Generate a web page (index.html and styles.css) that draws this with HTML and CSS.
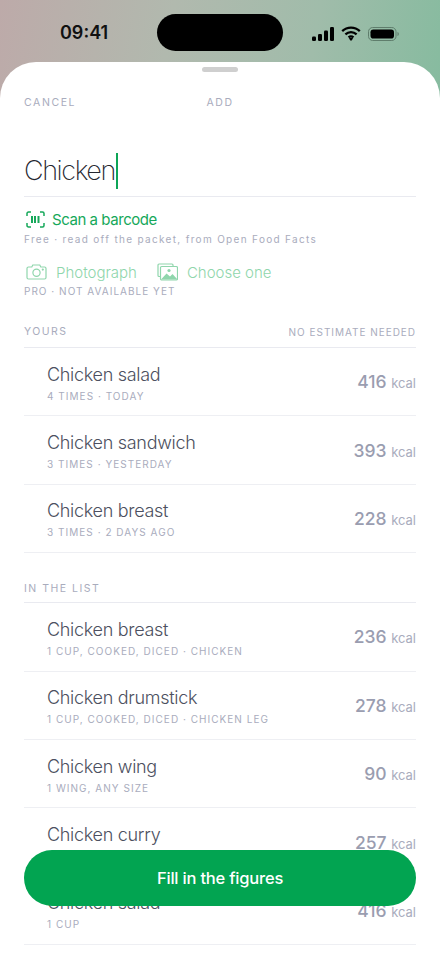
FILE: index.html
```html
<!DOCTYPE html>
<html lang="en">
<head>
<meta charset="utf-8">
<title>Add food</title>
<link rel="stylesheet" href="styles.css">
</head>
<body>
<div class="phone">
  <header class="status">
    <span class="time">09:41</span>
    <div class="island"></div>
    <div class="status-icons">
      <svg width="22" height="14" viewBox="0.5 0 22 14"><rect x="0.5" y="9.5" width="4" height="4.5" rx="1.2"/><rect x="6.5" y="7" width="4" height="7" rx="1.2"/><rect x="12.5" y="3.5" width="4" height="10.5" rx="1.2"/><rect x="18.5" y="0" width="4" height="14" rx="1.2"/></svg>
      <svg width="20" height="15" viewBox="0 0 20 15" fill="none" stroke="#000" stroke-width="2.3"><path d="M1.2 5.2C6.2.4 13.8.4 18.8 5.2"/><path d="M4.4 8.4c3.2-3 8-3 11.2 0"/><path d="M7.5 11.4c1.5-1.2 3.5-1.2 5 0"/><path d="M10 15l-2.2-2.6c1.3-.9 3.100-.9 4.400 0z" fill="#000" stroke="none"/></svg>
      <svg width="31" height="14" viewBox="0 0 31 14"><rect x="0.5" y="0.5" width="27.500" height="13" rx="4.200" fill="none" stroke="#5f7d6c"/><rect x="2.500" y="2.500" width="23.500" height="9" rx="2.800"/><path d="M29.500 5v4c.8-.3 1.300-1.100 1.300-2s-.5-1.700-1.300-2z" fill="#5f7d6c"/></svg>
    </div>
  </header>
  <main class="sheet">
    <div class="handle"></div>
    <nav class="topbar"><span class="cancel">CANCEL</span><span class="add">ADD</span></nav>
    <div class="search"><span class="query">Chicken</span><span class="caret"></span></div>
    <div class="scan">
      <svg class="scan-icon" width="19" height="17" viewBox="0 0 19 17" fill="none" stroke="#16a85a" stroke-width="1.500"><path d="M1 5V2.500C1 1.600 1.600 1 2.500 1H5M14 1h2.500c.9 0 1.500.6 1.500 1.500V5M18 12v2.500c0 .9-.6 1.500-1.500 1.500H14M5 16H2.500C1.600 16 1 15.400 1 14.500V12"/><path d="M6 5v7M9 5v7M12.500 5v7" stroke-width="2"/></svg>
      <span>Scan a barcode</span>
    </div>
    <p class="note">Free · read off the packet, from Open Food Facts</p>
    <div class="pro">
      <div class="pro-item">
        <svg width="21" height="16" viewBox="0 0 21 16" fill="none" stroke="#8fd6ac" stroke-width="1.200"><path d="M2.500 3h3.300l1-2h7l1 2h3.700c.8 0 1.500.7 1.500 1.500v9c0 .8-.7 1.500-1.500 1.500h-16C1.700 15 1 14.300 1 13.500v-9C1 3.700 1.700 3 2.500 3z"/><circle cx="10.500" cy="8.800" r="3.600"/><circle cx="16.800" cy="5.600" r=".5" fill="#8fd6ac"/></svg>
        <span>Photograph</span>
      </div>
      <div class="pro-item">
        <svg width="21" height="18" viewBox="0 0 21 18" fill="none" stroke="#8fd6ac" stroke-width="1.200"><path d="M3 13.500H2c-.6 0-1-.4-1-1V2c0-.6.400-1 1-1h13c.6 0 1 .4 1 1v1"/><rect x="3.500" y="3.500" width="17" height="13.500" rx="1.200"/><path d="M4 16.500l5.500-6 3.500 3 2.500-2.500 5 5.500z" fill="#8fd6ac" stroke="none"/><circle cx="12" cy="7.500" r="1.600" fill="#8fd6ac" stroke="none"/></svg>
        <span>Choose one</span>
      </div>
    </div>
    <p class="note caps">PRO · NOT AVAILABLE YET</p>

    <div class="section-head first"><span>YOURS</span><span class="hint">NO ESTIMATE NEEDED</span></div>
    <ul class="rows">
      <li class="row"><div class="info"><div class="name">Chicken salad</div><div class="meta">4 TIMES · TODAY</div></div><div class="cal"><b>416</b> <span>kcal</span></div></li>
      <li class="row"><div class="info"><div class="name">Chicken sandwich</div><div class="meta">3 TIMES · YESTERDAY</div></div><div class="cal"><b>393</b> <span>kcal</span></div></li>
      <li class="row"><div class="info"><div class="name">Chicken breast</div><div class="meta">3 TIMES · 2 DAYS AGO</div></div><div class="cal"><b>228</b> <span>kcal</span></div></li>
    </ul>

    <div class="section-head second"><span>IN THE LIST</span></div>
    <ul class="rows">
      <li class="row"><div class="info"><div class="name">Chicken breast</div><div class="meta">1 CUP, COOKED, DICED · CHICKEN</div></div><div class="cal"><b>236</b> <span>kcal</span></div></li>
      <li class="row"><div class="info"><div class="name">Chicken drumstick</div><div class="meta">1 CUP, COOKED, DICED · CHICKEN LEG</div></div><div class="cal"><b>278</b> <span>kcal</span></div></li>
      <li class="row"><div class="info"><div class="name">Chicken wing</div><div class="meta">1 WING, ANY SIZE</div></div><div class="cal"><b>90</b> <span>kcal</span></div></li>
      <li class="row"><div class="info"><div class="name">Chicken curry</div><div class="meta">1 CUP</div></div><div class="cal"><b>257</b> <span>kcal</span></div></li>
      <li class="row"><div class="info"><div class="name">Chicken salad</div><div class="meta">1 CUP</div></div><div class="cal"><b>416</b> <span>kcal</span></div></li>
    </ul>
    <button class="cta">Fill in the figures</button>
  </main>
</div>
</body>
</html>
```
FILE: styles.css
```css
* { box-sizing: border-box; }
html, body { margin: 0; padding: 0; }
body { font-family: Inter, "Noto Sans", sans-serif; background: #fff; }
.phone {
  position: relative;
  width: 440px;
  height: 956px;
  overflow: hidden;
  background: linear-gradient(100deg, #bdaaa9 0%, #b1b9ae 38%, #a0bcaa 70%, #86bb9f 100%) no-repeat;
  background-size: 100% 110px;
  display: flex;
  flex-direction: column;
}
.status {
  height: 62px;
  flex: none;
  position: relative;
  display: flex;
  align-items: flex-start;
  justify-content: space-between;
  padding: 23px 41px 0 60px;
}
.time { font-size: 18px; font-weight: 600; line-height: 20px; color: #111; letter-spacing: 0; }
.island {
  position: absolute;
  left: 157px;
  top: 14px;
  width: 126px;
  height: 37px;
  border-radius: 19px;
  background: #000;
}
.status-icons { display: flex; align-items: center; gap: 7px; margin-top: 3px; }
.sheet {
  position: relative;
  flex: 1;
  background: #fff;
  border-radius: 36px 36px 0 0;
  padding: 0 24px;
  overflow: hidden;
}
.handle { width: 36px; height: 5px; border-radius: 3px; background: #cfcfcf; margin: 5px auto 0; }
.topbar {
  display: flex;
  height: 14px;
  margin-top: 24px;
  align-items: center;
  font-size: 10.500px;
  letter-spacing: 1.600px;
  color: #a9acbd;
  position: relative;
  justify-content: center;
}
.cancel { position: absolute; left: 0; top: 0; line-height: 14px; }
.add { line-height: 14px; }
.search {
  display: flex;
  align-items: center;
  height: 69px;
  margin-top: 18px;
  padding-top: 18px;
  border-bottom: 1px solid #e9eaf0;
}
.query { font-size: 27px; font-weight: 200; letter-spacing: -1.400px; color: #24262f; line-height: 36px; }
.caret { width: 2px; height: 36px; background: #0da557; margin-left: 1px; }
.scan { display: flex; align-items: center; gap: 7px; margin-top: 13px; height: 18px; font-size: 15px; color: #16a85a; letter-spacing: -0.450px; padding-left: 2px; }
.scan-icon { flex: none; }
.note { margin: 4px 0 0; font-size: 10px; line-height: 14px; letter-spacing: 1.320px; color: #a9acbd; }
.note.caps { margin-top: 2px; letter-spacing: 1.020px; }
.pro { display: flex; gap: 20px; margin-top: 16px; height: 20px; padding-left: 2px; }
.pro-item { display: flex; align-items: center; gap: 9px; font-size: 15px; font-weight: 300; color: #8fd6ac; letter-spacing: 0; }
.section-head {
  display: flex;
  justify-content: space-between;
  align-items: center;
  font-size: 10.500px;
  letter-spacing: 1.500px;
  color: #a9acbd;
  border-bottom: 1px solid #e9eaf0;
  line-height: 14px;
}
.section-head.first { margin-top: 26px; height: 24px; padding-bottom: 8px; }
.section-head.second { margin-top: 28px; height: 22px; padding-bottom: 6px; }
.hint { font-size: 10px; letter-spacing: 0.970px; }
.rows { list-style: none; margin: 0; padding: 0; }
.row {
  display: flex;
  justify-content: space-between;
  align-items: center;
  height: 68.400px;
  padding-left: 23px;
  border-bottom: 1px solid #eeeff3;
}
.info { display: flex; flex-direction: column; gap: 2px; padding-top: 2px; }
.name { font-size: 18px; font-weight: 300; line-height: 24px; color: #4c5060; letter-spacing: -0.300px; }
.meta { font-size: 10px; line-height: 14px; letter-spacing: 1.030px; color: #a9acbd; }
.cal { font-size: 13px; font-weight: 400; color: #a9acbd; }
.cal b { font-size: 17.500px; font-weight: 500; color: #9a9db0; letter-spacing: 0; margin-right: 1px; }
.cta {
  position: absolute;
  left: 24px;
  top: 788px;
  width: 392px;
  height: 56px;
  border: 0;
  border-radius: 28px;
  background: #02a451;
  color: #fff;
  font-family: inherit;
  font-size: 16.500px;
  font-weight: 500;
  letter-spacing: -0.200px;
}
```
